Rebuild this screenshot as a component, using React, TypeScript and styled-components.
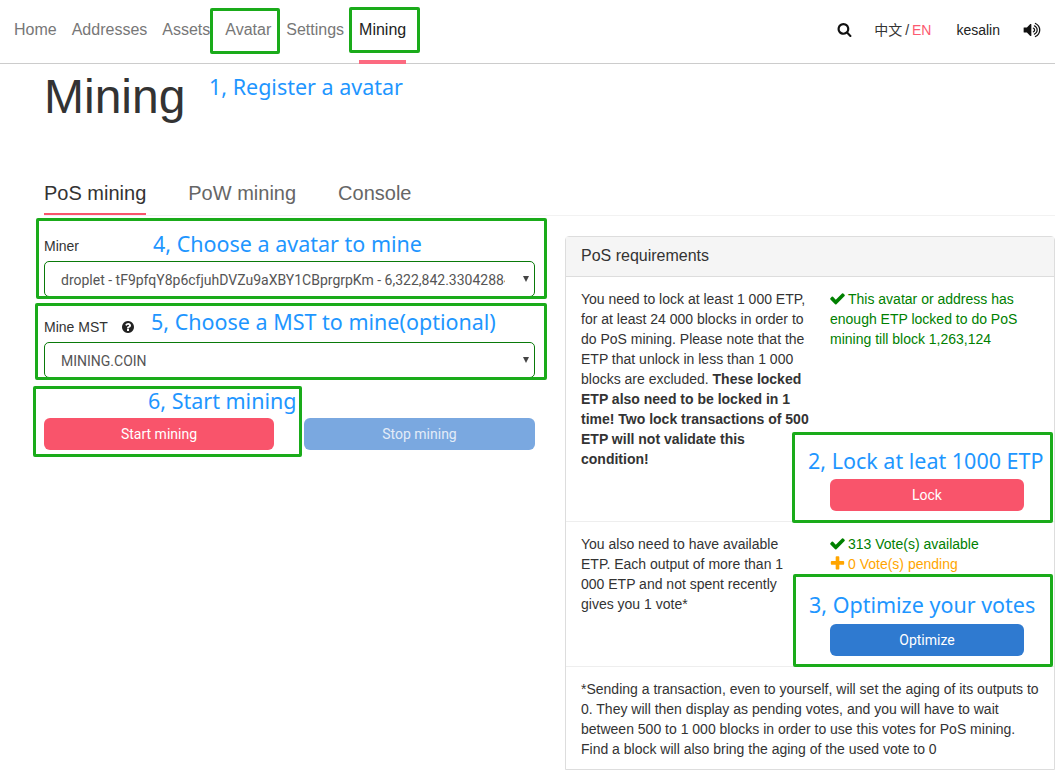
import React from "react";
import styled, { createGlobalStyle } from "styled-components";

const Global = createGlobalStyle`
  html, body { margin: 0; padding: 0; background: #fff; }
  body { font-family: "Liberation Sans", Arial, sans-serif; font-size: 14px; line-height: 20px; color: #333; }
  * { box-sizing: border-box; }
`;

const ICONS = {
  check:
    "M1671 566q0 40-28 68l-724 724-136 136q-28 28-68 28t-68-28l-136-136-362-362q-28-28-28-68t28-68l136-136q28-28 68-28t68 28l294 295 656-657q28-28 68-28t68 28l136 136q28 28 28 68z",
  plus:
    "M1600 736v192q0 40-28 68t-68 28h-416v416q0 40-28 68t-68 28h-192q-40 0-68-28t-28-68v-416h-416q-40 0-68-28t-28-68v-192q0-40 28-68t68-28h416v-416q0-40 28-68t68-28h192q40 0 68 28t28 68v416h416q40 0 68 28t28 68z",
  search:
    "M1216 832q0-185-131.5-316.5t-316.5-131.5-316.5 131.5-131.5 316.5 131.5 316.5 316.5 131.5 316.5-131.5 131.5-316.5zm512 832q0 52-38 90t-90 38q-54 0-90-38l-343-342q-179 124-399 124-143 0-273.5-55.5t-225-150-150-225-55.5-273.5 55.5-273.5 150-225 225-150 273.5-55.5 273.5 55.5 225 150 150 225 55.5 273.5q0 220-124 399l343 343q37 37 37 90z",
  volume:
    "M832 352v1088q0 26-19 45t-45 19-45-19l-333-333h-262q-26 0-45-19t-19-45v-384q0-26 19-45t45-19h262l333-333q19-19 45-19t45 19 19 45zm384 544q0 76-42.5 141.5t-112.5 93.5q-10 5-25 5-26 0-45-18.5t-19-45.5q0-21 12-35.5t29-25 34-23 29-36 12-56.5-12-56.5-29-36-34-23-29-25-12-35.5q0-27 19-45.5t45-18.5q15 0 25 5 70 27 112.5 93t42.5 142zm256 0q0 153-85 282.5t-225 188.5q-13 5-25 5-27 0-46-19t-19-45q0-39 39-59 56-29 76-44 74-54 115.5-135.5t41.5-173.5-41.5-173.5-115.5-135.5q-20-15-76-44-39-20-39-59 0-26 19-45t45-19q13 0 26 5 140 59 225 188.5t85 282.5zm256 0q0 230-127 422.5t-338 283.5q-13 5-26 5-26 0-45-19t-19-45q0-36 39-59 7-4 22.5-10.5t22.5-10.5q46-25 82-51 123-91 192-227t69-289-69-289-192-227q-36-26-82-51-7-4-22.5-10.5t-22.5-10.5q-39-23-39-59 0-26 19-45t45-19q13 0 26 5 211 91 338 283.5t127 422.5z",
  question:
    "M1024 1376v-192q0-14-9-23t-23-9h-192q-14 0-23 9t-9 23v192q0 14 9 23t23 9h192q14 0 23-9t9-23zm256-672q0-88-55.5-163t-138.5-116-170-41q-243 0-371 213-15 24 8 42l132 100q7 6 19 6 16 0 25-12 53-68 86-92 34-24 86-24 48 0 85.5 26t37.5 59q0 38-20 61t-68 45q-63 28-115.5 86.5t-52.5 125.5v36q0 14 9 23t23 9h192q14 0 23-9t9-23q0-19 21.5-49.5t54.5-49.5q32-18 49-28.5t46-35 44.5-48 28-60.5 12.5-81zm384 192q0 209-103 385.5t-279.5 279.5-385.5 103-385.5-103-279.5-279.5-103-385.5 103-385.5 279.5-279.5 385.5-103 385.5 103 279.5 279.5 103 385.5z",
};

const Glyph = styled.svg<{ $size: number }>`
  display: inline-block;
  flex: none;
  width: ${(p) => p.$size}px;
  height: ${(p) => p.$size}px;
  fill: currentColor;
`;

const Icon = ({ name, size, className }: { name: keyof typeof ICONS; size: number; className?: string }) => (
  <Glyph viewBox="0 0 1792 1792" $size={size} className={className}>
    <path d={ICONS[name]} />
  </Glyph>
);

const Page = styled.div`
  position: relative;
  width: 1055px;
  height: 770px;
  overflow: hidden;
`;

const Nav = styled.nav`
  display: flex;
  align-items: stretch;
  height: 64px;
  border-bottom: 1px solid #ccc;
  padding: 0 14px 0 14px;
`;

const NavLink = styled.a<{ $active?: boolean }>`
  display: block;
  position: relative;
  margin-right: 15px;
  padding-top: 20px;
  font-size: 16px;
  line-height: 20px;
  color: ${(p) => (p.$active ? "#222" : "#777")};
  ${(p) =>
    p.$active &&
    `&::after { content: ""; position: absolute; left: 0; right: 0; bottom: -1px; height: 4px; background: #fc6a80; }`}
`;

const NavRight = styled.div`
  margin-left: auto;
  display: flex;
  align-items: center;
  padding-bottom: 4px;
  font-size: 14px;
  color: #222;
`;

const SearchIcon = styled(Icon)`
  margin-right: 22px;
  margin-top: -1px;
  color: #111;
`;

const Lang = styled.span`
  margin-right: 25px;
  font-family: "Liberation Sans", "Noto Sans CJK SC", sans-serif;
  word-spacing: -1px;
  color: #333;
`;

const LangActive = styled.span`
  color: #fc5a70;
`;

const User = styled.span`
  margin-right: 23px;
`;

const SoundIcon = styled(Icon)`
  color: #111;
`;

const Title = styled.h1`
  margin: 0;
  padding: 4px 0 0 44px;
  height: 112px;
  font-size: 48px;
  line-height: 58px;
  font-weight: 400;
  color: #333;
`;

const Tabs = styled.div`
  display: flex;
  gap: 42px;
  height: 40px;
  margin-left: 44px;
  border-bottom: 1px solid #f2f2f2;
`;

const Tab = styled.a<{ $active?: boolean }>`
  display: block;
  height: 39px;
  padding-top: 4px;
  font-size: 20px;
  line-height: 26px;
  color: ${(p) => (p.$active ? "#333" : "#666")};
  border-bottom: ${(p) => (p.$active ? "2px solid #f9546b" : "none")};
`;

const Columns = styled.div`
  display: grid;
  grid-template-columns: 491px 490px;
  column-gap: 30px;
  padding-left: 44px;
`;

const FormColumn = styled.div`
  padding-top: 19px;
`;

const Field = styled.div`
  margin-bottom: 19px;
`;

const Label = styled.label`
  display: flex;
  align-items: center;
  gap: 13px;
  height: 26px;
  padding-bottom: 5px;
  color: #333;
`;

const HelpIcon = styled(Icon)`
  color: #222;
`;

const SelectWrap = styled.div`
  position: relative;
  &::after {
    content: "";
    position: absolute;
    right: 6px;
    top: 15px;
    border-left: 3px solid transparent;
    border-right: 3px solid transparent;
    border-top: 6px solid #444;
  }
`;

const Select = styled.select`
  display: block;
  width: 100%;
  height: 36px;
  padding: 2px 29px 0 16px;
  appearance: none;
  background: #fff;
  border: 1px solid #0a7a0a;
  border-radius: 5px;
  font-family: Roboto, "Liberation Sans", sans-serif;
  font-size: 14px;
  color: #555;
`;

const Buttons = styled.div`
  display: grid;
  grid-template-columns: 230px 231px;
  column-gap: 30px;
  padding-top: 21px;
`;

const ActionButton = styled.button<{ $tone: "red" | "blue" | "pale" }>`
  display: block;
  width: 100%;
  height: 32px;
  padding: 0;
  border: 0;
  border-radius: 6px;
  font-family: Roboto, "Liberation Sans", sans-serif;
  font-size: 14px;
  color: ${(p) => (p.$tone === "pale" ? "#e3ecf8" : "#fff")};
  background: ${(p) => (p.$tone === "red" ? "#f9546b" : p.$tone === "blue" ? "#2f7ad0" : "#7aa8e0")};
`;

const Panel = styled.section`
  margin-top: 20px;
  height: 534px;
  border: 1px solid #ddd;
  border-radius: 4px 4px 0 0;
`;

const PanelHeading = styled.div`
  height: 40px;
  padding: 9px 15px 0;
  background: #f5f5f5;
  border-bottom: 1px solid #ddd;
  font-size: 16px;
  line-height: 20px;
  color: #333;
`;

const PanelRow = styled.div<{ $height: number }>`
  display: grid;
  grid-template-columns: 249px 194px;
  align-items: start;
  height: ${(p) => p.$height}px;
  padding: 12px 15px 0;
  border-bottom: 1px solid #eee;
  color: #333;
`;

const TextCell = styled.div`
  width: 229px;
`;

const Cell = styled.div`
  display: flex;
  flex-direction: column;
  height: 100%;
`;

const Note = styled.div`
  padding: 12px 15px 0;
`;

const Status = styled.div<{ $tone: "ok" | "warn" }>`
  color: ${(p) => (p.$tone === "ok" ? "#008000" : "#ffa500")};
  svg { vertical-align: -3px; margin: 0 2px 0 -1px; }
`;

const CellButton = styled.div<{ $top: number }>`
  padding-top: ${(p) => p.$top}px;
`;

const Marker = styled.div<{ $x: number; $y: number; $w: number; $h: number }>`
  position: absolute;
  left: ${(p) => p.$x}px;
  top: ${(p) => p.$y}px;
  width: ${(p) => p.$w}px;
  height: ${(p) => p.$h}px;
  border: 3px solid #1aab1a;
  border-radius: 2px;
  pointer-events: none;
`;

const Callout = styled.div<{ $x: number; $y: number }>`
  position: absolute;
  left: ${(p) => p.$x}px;
  top: ${(p) => p.$y}px;
  font-family: "Noto Sans", "Open Sans", sans-serif;
  font-size: 21.5px;
  line-height: 30px;
  white-space: nowrap;
  color: #1e96ff;
`;

export default function App() {
  return (
    <Page>
      <Global />
      <Nav>
        <NavLink>Home</NavLink>
        <NavLink>Addresses</NavLink>
        <NavLink>Assets</NavLink>
        <NavLink>Avatar</NavLink>
        <NavLink>Settings</NavLink>
        <NavLink $active>Mining</NavLink>
        <NavRight>
          <SearchIcon name="search" size={15} />
          <Lang>
            中文 / <LangActive>EN</LangActive>
          </Lang>
          <User>kesalin</User>
          <SoundIcon name="volume" size={18} />
        </NavRight>
      </Nav>
      <Title>Mining</Title>
      <Tabs>
        <Tab $active>PoS mining</Tab>
        <Tab>PoW mining</Tab>
        <Tab>Console</Tab>
      </Tabs>
      <Columns>
        <FormColumn>
          <Field>
            <Label>Miner</Label>
            <SelectWrap>
              <Select defaultValue="droplet">
                <option value="droplet">droplet - tF9pfqY8p6cfjuhDVZu9aXBY1CBprgrpKm - 6,322,842.33042884 ETP</option>
              </Select>
            </SelectWrap>
          </Field>
          <Field>
            <Label>
              Mine MST <HelpIcon name="question" size={14} />
            </Label>
            <SelectWrap>
              <Select defaultValue="coin">
                <option value="coin">MINING.COIN</option>
              </Select>
            </SelectWrap>
          </Field>
          <Buttons>
            <ActionButton $tone="red">Start mining</ActionButton>
            <ActionButton $tone="pale">Stop mining</ActionButton>
          </Buttons>
        </FormColumn>
        <Panel>
          <PanelHeading>PoS requirements</PanelHeading>
          <PanelRow $height={245}>
            <TextCell>
              You need to lock at least 1 000 ETP, for at least 24 000 blocks in order to do PoS mining. Please note that
              the ETP that unlock in less than 1 000 blocks are excluded.{" "}
              <b>These locked ETP also need to be locked in 1 time! Two lock transactions of 500 ETP will not validate this condition!</b>
            </TextCell>
            <Cell>
              <Status $tone="ok">
                <Icon name="check" size={17} />
                This avatar or address has enough ETP locked to do PoS mining till block 1,263,124
              </Status>
              <CellButton $top={130}>
                <ActionButton $tone="red">Lock</ActionButton>
              </CellButton>
            </Cell>
          </PanelRow>
          <PanelRow $height={145}>
            <TextCell>
              You also need to have available ETP. Each output of more than 1 000 ETP and not spent recently gives you 1 vote*
            </TextCell>
            <Cell>
              <Status $tone="ok">
                <Icon name="check" size={17} />
                313 Vote(s) available
              </Status>
              <Status $tone="warn">
                <Icon name="plus" size={17} />0 Vote(s) pending
              </Status>
              <CellButton $top={50}>
                <ActionButton $tone="blue">Optimize</ActionButton>
              </CellButton>
            </Cell>
          </PanelRow>
          <Note>
            *Sending a transaction, even to yourself, will set the aging of its outputs to 0. They will then display as
            pending votes, and you will have to wait between 500 to 1 000 blocks in order to use this votes for PoS mining.
            Find a block will also bring the aging of the used vote to 0
          </Note>
        </Panel>
      </Columns>
      <Marker $x={210} $y={8} $w={70} $h={46} />
      <Marker $x={349} $y={7} $w={71} $h={46} />
      <Marker $x={36} $y={218} $w={511} $h={81} />
      <Marker $x={35} $y={303} $w={512} $h={77} />
      <Marker $x={33} $y={386} $w={269} $h={71} />
      <Marker $x={792} $y={432} $w={261} $h={91} />
      <Marker $x={793} $y={574} $w={260} $h={93} />
      <Callout $x={209} $y={72}>1, Register a avatar</Callout>
      <Callout $x={153} $y={229}>4, Choose a avatar to mine</Callout>
      <Callout $x={151} $y={307}>5, Choose a MST to mine(optional)</Callout>
      <Callout $x={148} $y={386}>6, Start mining</Callout>
      <Callout $x={808} $y={446}>2, Lock at leat 1000 ETP</Callout>
      <Callout $x={809} $y={590}>3, Optimize your votes</Callout>
    </Page>
  );
}
